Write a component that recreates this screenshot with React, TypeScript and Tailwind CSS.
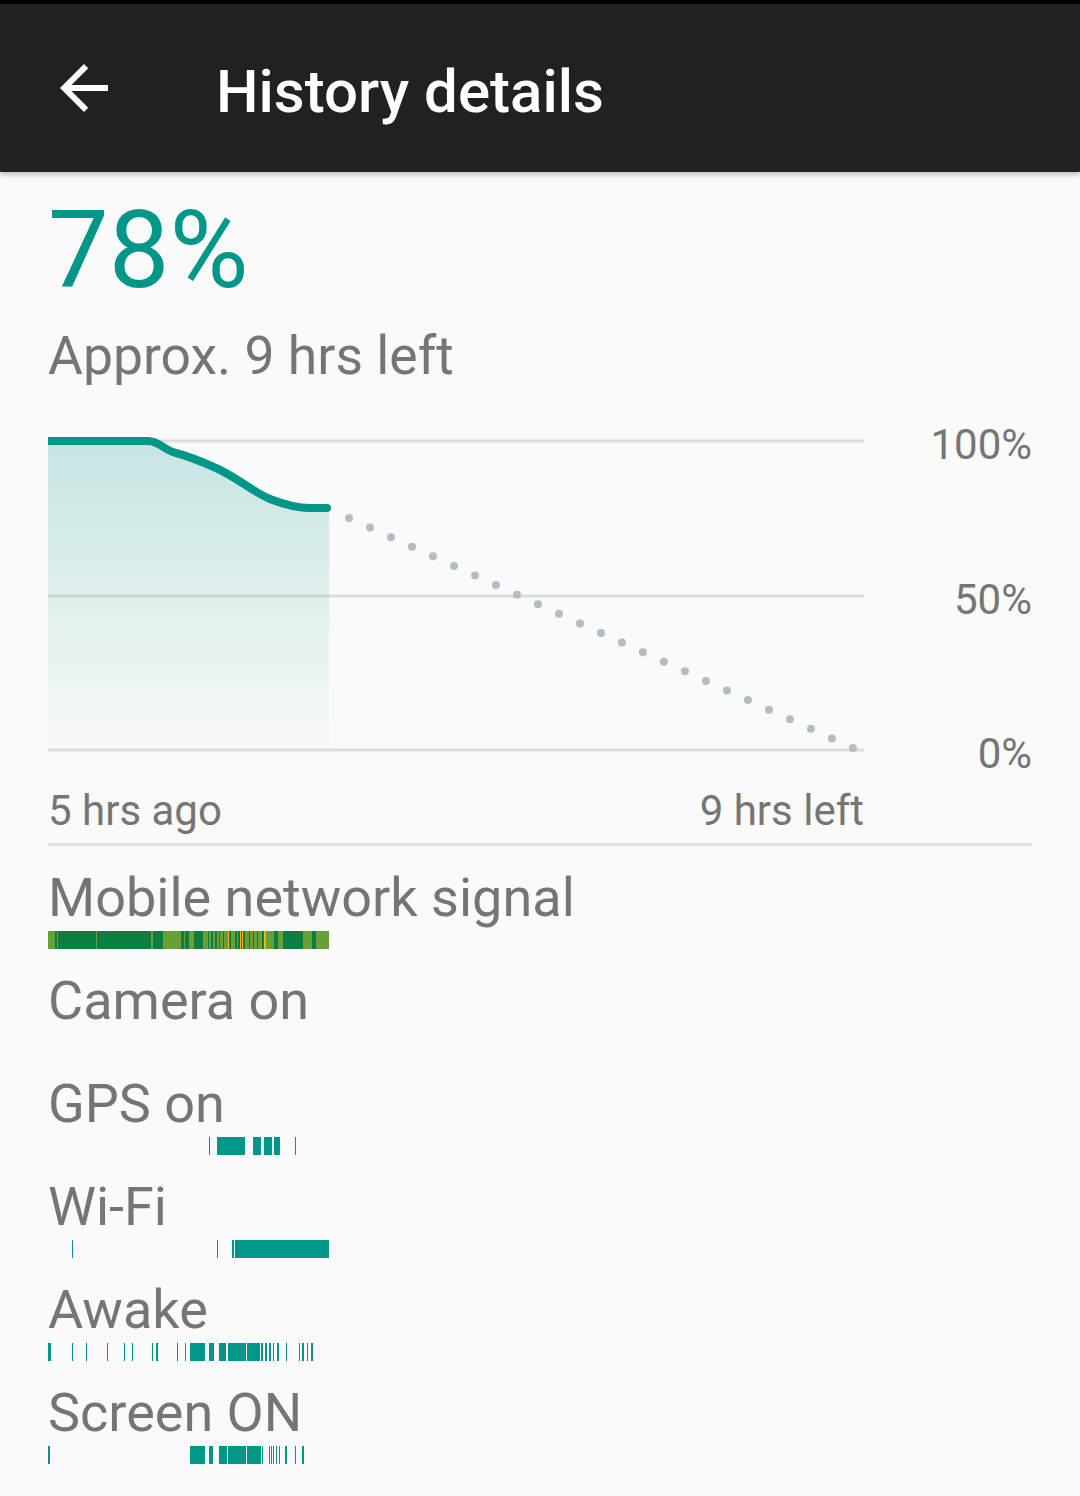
import React from "react";

type Seg = [number, number];

const TEAL = "#009688";

function Bar({ segs, color = TEAL, bg, extra }: { segs: Seg[]; color?: string; bg?: string; extra?: { segs: Seg[]; color: string }[] }) {
  return (
    <svg width={281} height={18} viewBox="54 0 843 18" preserveAspectRatio="none" className="block" shapeRendering="crispEdges">
      {bg && <rect x={54} y={0} width={843} height={18} fill={bg} />}
      {segs.map(([a, b], i) => (
        <rect key={i} x={a} y={0} width={b - a} height={18} fill={color} />
      ))}
      {extra?.map((e, j) =>
        e.segs.map(([a, b], i) => <rect key={`${j}-${i}`} x={a} y={0} width={b - a} height={18} fill={e.color} />)
      )}
    </svg>
  );
}

const mobileDark: Seg[] = [
  [75, 80], [83, 198], [201, 363], [369, 399], [453, 461], [466, 476], [491, 518], [533, 537], [543, 548],
  [555, 560], [566, 570], [578, 583], [597, 603], [616, 620], [625, 630], [633, 636], [640, 645], [657, 661],
  [668, 671], [682, 685], [696, 703], [731, 743], [760, 818], [846, 858],
];
const mobileYellow: Seg[] = [[593, 597], [630, 633], [636, 640], [703, 707]];

const gps: Seg[] = [[537, 540], [561, 645], [668, 694], [702, 726], [732, 750], [795, 798]];
const wifi: Seg[] = [[126, 129], [561, 564], [606, 611], [615, 897]];
const awake: Seg[] = [
  [54, 63], [126, 129], [168, 171], [231, 234], [282, 285], [306, 309], [366, 370], [378, 384], [441, 444],
  [465, 468], [480, 525], [537, 552], [567, 588], [594, 648], [651, 690], [693, 700], [705, 711], [717, 723],
  [729, 732], [741, 747], [768, 771], [807, 810], [816, 822], [831, 834], [843, 849],
];
const screen: Seg[] = [
  [54, 60], [480, 525], [537, 549], [566, 590], [594, 648], [652, 692], [696, 699], [717, 720], [723, 726],
  [730, 733], [738, 741], [746, 749], [765, 771], [795, 798], [816, 822],
];

function Row({ label, children }: { label: string; children?: React.ReactNode }) {
  return (
    <div className="flex flex-col h-[103px]">
      <div className="h-[64px] leading-[64px] text-[54px] text-[#757575] whitespace-nowrap">{label}</div>
      <div className="mt-[1px] h-[18px]">{children}</div>
    </div>
  );
}

function Chart() {
  const line =
    "M0 21 L100 21 C112 21 115 30 128 33 C140 36 150 40 168 48 C190 58 205 72 222 79 C240 86 250 88 262 88 L279 88";
  const fill =
    "M0 21 L100 21 C112 21 115 30 128 33 C140 36 150 40 168 48 C190 58 205 72 222 79 C240 86 250 88 262 88 L281 88 L281 330 L0 330 Z";
  return (
    <svg width={816} height={340} viewBox="0 0 816 340" className="block shrink-0">
      <defs>
        <linearGradient id="fillg" x1="0" y1="21" x2="0" y2="330" gradientUnits="userSpaceOnUse">
          <stop offset="0" stopColor={TEAL} stopOpacity="0.21" />
          <stop offset="1" stopColor={TEAL} stopOpacity="0.01" />
        </linearGradient>
      </defs>
      <line x1="0" y1="21" x2="816" y2="21" stroke="#dcdcdc" strokeWidth="3" />
      <line x1="0" y1="176" x2="816" y2="176" stroke="#dcdcdc" strokeWidth="3" />
      <line x1="0" y1="330" x2="816" y2="330" stroke="#dcdcdc" strokeWidth="3" />
      <path d={fill} fill="url(#fillg)" />
      <path d={line} fill="none" stroke={TEAL} strokeWidth="8" strokeLinecap="round" strokeLinejoin="round" />
      <line
        x1="301"
        y1="98"
        x2="805"
        y2="328"
        stroke="#b0bec5"
        strokeWidth="8"
        strokeLinecap="round"
        strokeDasharray="0 23.08"
      />
    </svg>
  );
}

export default function App() {
  return (
    <div className="min-h-[1496px] bg-[#fafafa] font-['Roboto',sans-serif] overflow-hidden">
      <div className="relative z-10 bg-black pt-[4px] shadow-[0_2px_6px_rgba(0,0,0,0.3)]">
        <div className="h-[168px] bg-[#212121] flex items-start">
          <svg width={72} height={72} viewBox="0 0 24 24" className="ml-[48px] mt-[48px]" fill="#ffffff">
            <path d="M20 11H7.83l5.59-5.59L12 4l-8 8 8 8 1.41-1.41L7.83 13H20v-2z" />
          </svg>
          <div className="ml-[96px] mt-[56px] text-[60px] leading-[63px] font-medium text-white whitespace-nowrap">
            History details
          </div>
        </div>
      </div>

      <div className="px-[48px]">
        <div className="mt-[23px] text-[108px] leading-[111px] text-[#009688]">78%</div>
        <div className="mt-[18px] h-[64px] leading-[64px] text-[53.5px] text-[#757575]">Approx. 9 hrs left</div>

        <div className="mt-[32px] h-[340px] flex items-start">
          <Chart />
          <div className="flex-1 flex flex-col items-end pt-[1px] text-[42px] leading-[48px] text-[#757575]">
            <div>100%</div>
            <div className="mt-[107px]">50%</div>
            <div className="mt-[106px]">0%</div>
          </div>
        </div>

        <div className="mt-[27px] w-[816px] flex justify-between text-[42px] leading-[48px] text-[#757575]">
          <span>5 hrs ago</span>
          <span>9 hrs left</span>
        </div>

        <div className="mt-[8px] h-[3px] bg-[#e0e0e0]" />

        <div className="mt-[20px] flex flex-col">
          <Row label="Mobile network signal">
            <Bar segs={mobileDark} color="#0b7e41" bg="#689f38" extra={[{ segs: mobileYellow, color: "#fbb300" }]} />
          </Row>
          <Row label="Camera on" />
          <Row label="GPS on">
            <Bar segs={gps} />
          </Row>
          <Row label="Wi-Fi">
            <Bar segs={wifi} />
          </Row>
          <Row label="Awake">
            <Bar segs={awake} />
          </Row>
          <Row label="Screen ON">
            <Bar segs={screen} />
          </Row>
        </div>
      </div>
    </div>
  );
}
